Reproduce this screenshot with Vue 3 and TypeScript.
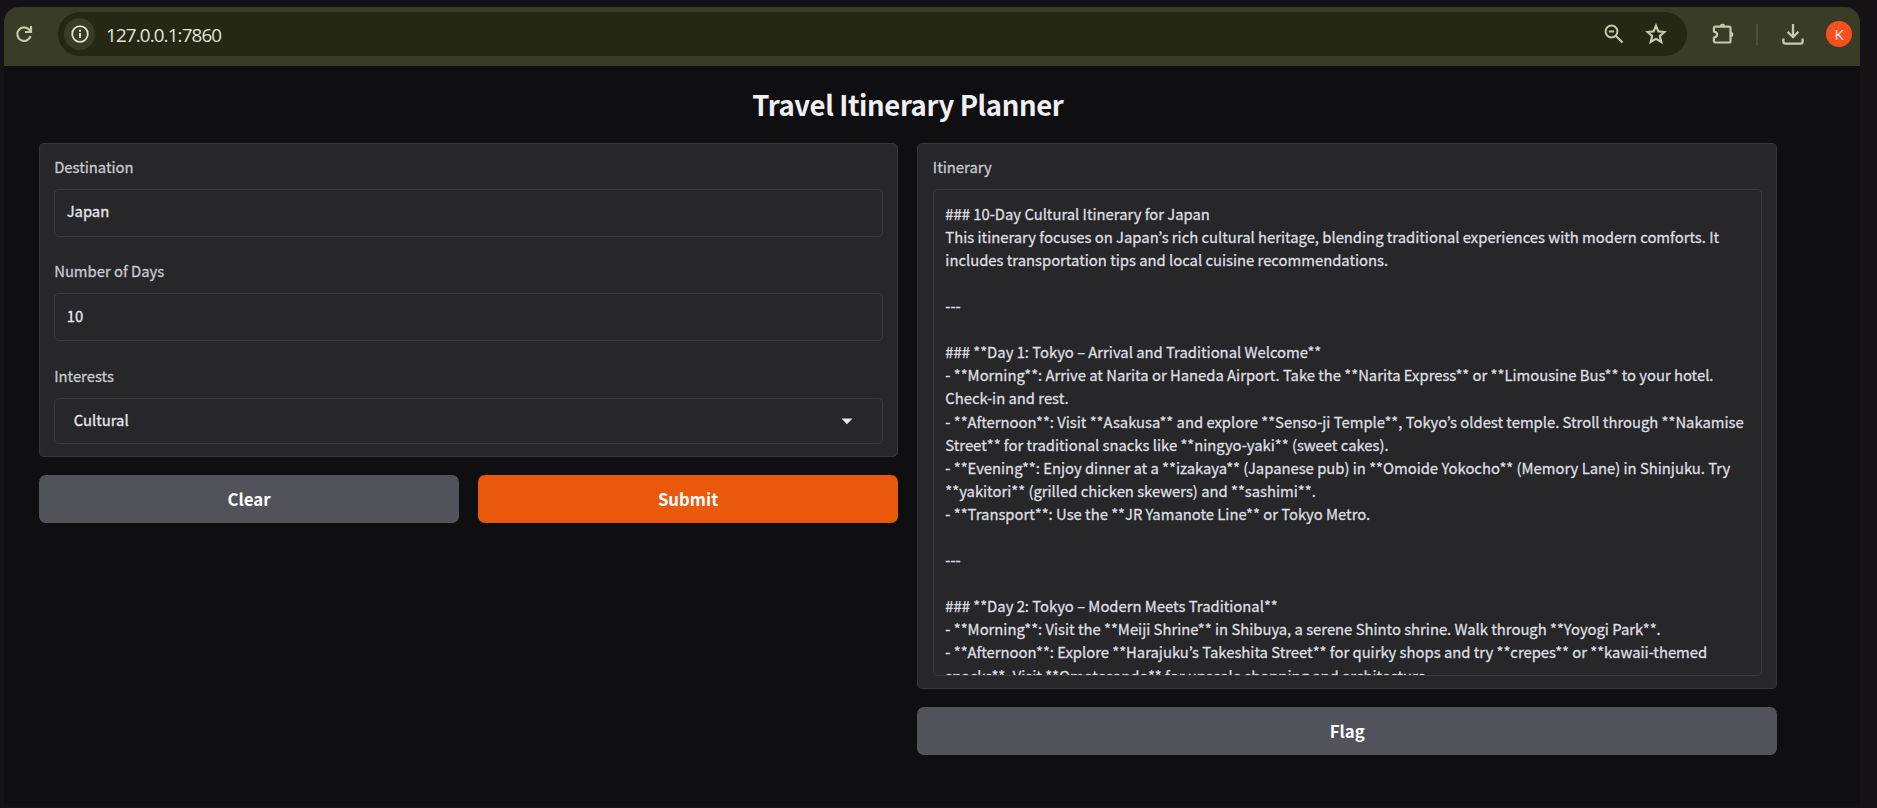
<script setup lang="ts">
import { ref } from 'vue'

const destination = ref('Japan')
const days = ref('10')
const interest = ref('Cultural')

const itinerary: string[] = [
  '### 10-Day Cultural Itinerary for Japan',
  'This itinerary focuses on Japan’s rich cultural heritage, blending traditional experiences with modern comforts. It',
  'includes transportation tips and local cuisine recommendations.',
  '',
  '---',
  '',
  '### **Day 1: Tokyo – Arrival and Traditional Welcome**',
  '- **Morning**: Arrive at Narita or Haneda Airport. Take the **Narita Express** or **Limousine Bus** to your hotel.',
  'Check-in and rest.',
  '- **Afternoon**: Visit **Asakusa** and explore **Senso-ji Temple**, Tokyo’s oldest temple. Stroll through **Nakamise',
  'Street** for traditional snacks like **ningyo-yaki** (sweet cakes).',
  '- **Evening**: Enjoy dinner at a **izakaya** (Japanese pub) in **Omoide Yokocho** (Memory Lane) in Shinjuku. Try',
  '**yakitori** (grilled chicken skewers) and **sashimi**.',
  '- **Transport**: Use the **JR Yamanote Line** or Tokyo Metro.',
  '',
  '---',
  '',
  '### **Day 2: Tokyo – Modern Meets Traditional**',
  '- **Morning**: Visit the **Meiji Shrine** in Shibuya, a serene Shinto shrine. Walk through **Yoyogi Park**.',
  '- **Afternoon**: Explore **Harajuku’s Takeshita Street** for quirky shops and try **crepes** or **kawaii-themed',
  'snacks**. Visit **Omotesando** for upscale shopping and architecture.',
]
</script>

<template>
  <div class="desktop">
    <div class="window">
      <header class="toolbar">
        <svg class="reload" viewBox="0 0 18 18" fill="none">
          <path d="M15.6 11.2A6.8 6.8 0 1 1 14.2 4.6L16 6.6" stroke="currentColor" stroke-width="2.2" />
          <path d="M16 1v6h-6" stroke="currentColor" stroke-width="2.2" />
        </svg>
        <div class="omnibox">
          <span class="site-info">
            <svg viewBox="0 0 18 18" fill="none">
              <circle cx="9" cy="9" r="7.8" stroke="currentColor" stroke-width="1.8" />
              <path d="M9 8v5" stroke="currentColor" stroke-width="1.9" />
              <path d="M9 4.8v1.9" stroke="currentColor" stroke-width="1.9" />
            </svg>
          </span>
          <span class="url">127.0.0.1:7860</span>
          <svg class="magnifier" viewBox="0 0 20 20" fill="none">
            <circle cx="7.5" cy="7.5" r="5.9" stroke="currentColor" stroke-width="2" />
            <path d="M11.7 11.7l6.8 6.8" stroke="currentColor" stroke-width="2.2" />
            <path d="M4.9 7.5h5.2" stroke="currentColor" stroke-width="1.8" />
          </svg>
          <svg class="star" viewBox="0 0 20 20" fill="none">
            <path d="M10 2.6l2.2 5.1 5.5.5-4.2 3.6 1.3 5.5-4.8-2.9-4.8 2.9 1.3-5.5-4.2-3.6 5.5-.5z" stroke="currentColor" stroke-width="2" />
          </svg>
        </div>
        <svg class="puzzle" viewBox="0 0 24 24">
          <path d="M4.4 4.6h13.7q1.4 0 1.4 1.4v13q0 1.5-1.5 1.5H4.3q-1.4 0-1.4-1.4v-3.5q3.2-.4 3.2-3t-3.2-3V6q0-1.4 1.5-1.4z" fill="none" stroke="currentColor" stroke-width="2.2" stroke-linejoin="round" />
          <path d="M8.8 4.4a2.7 2.7 0 0 1 5.4 0z" fill="currentColor" />
          <path d="M19.6 9.8a2.7 2.7 0 0 1 0 5.4z" fill="currentColor" />
        </svg>
        <span class="divider"></span>
        <svg class="download" viewBox="0 0 22 22" fill="none">
          <path d="M11 1v12.5M5.6 8.8l5.4 5.4 5.4-5.4" stroke="currentColor" stroke-width="2.3" />
          <path d="M1.4 15.6v3.1q0 1.9 1.9 1.9h15.4q1.9 0 1.9-1.9v-3.1" stroke="currentColor" stroke-width="2.3" />
        </svg>
        <span class="avatar">K</span>
      </header>

      <main class="page">
        <h1 class="title">Travel Itinerary Planner</h1>
        <div class="columns">
          <section class="column">
            <div class="panel form">
              <div class="field">
                <span class="label">Destination</span>
                <div class="box">{{ destination }}</div>
              </div>
              <div class="field roomy">
                <span class="label">Number of Days</span>
                <div class="box tall">{{ days }}</div>
              </div>
              <div class="field">
                <span class="label">Interests</span>
                <div class="box select">
                  <span>{{ interest }}</span>
                  <svg class="caret" viewBox="0 0 12 7"><path d="M.5.5h11L6 6.3z" fill="currentColor" /></svg>
                </div>
              </div>
            </div>
            <div class="actions">
              <button class="btn" type="button">Clear</button>
              <button class="btn primary" type="button">Submit</button>
            </div>
          </section>
          <section class="column">
            <div class="panel output">
              <span class="label">Itinerary</span>
              <div class="text">
                <div v-for="(line, i) in itinerary" :key="i" class="line">{{ line }}</div>
              </div>
            </div>
            <div class="actions">
              <button class="btn" type="button">Flag</button>
            </div>
          </section>
        </div>
      </main>
    </div>
  </div>
</template>

<style>
body {
  margin: 0;
  background: #151216;
}
</style>

<style scoped>
.desktop {
  box-sizing: border-box;
  width: 1877px;
  height: 808px;
  padding: 7px 17px 1px 4px;
  overflow: hidden;
  background: #151216;
  font-family: "Noto Sans CJK JP", "Open Sans", sans-serif;
}
.window {
  display: flex;
  flex-direction: column;
  height: 800px;
  border-radius: 15px 15px 0 0;
  overflow: hidden;
  background: #0f0f11;
}
.toolbar {
  box-sizing: border-box;
  display: flex;
  align-items: center;
  height: 59px;
  flex: none;
  padding: 0 8px 5px 10.5px;
  background: #393d27;
  color: #c5c9ae;
}
.toolbar svg {
  display: block;
  flex: none;
}
.reload {
  width: 18px;
  height: 18px;
}
.omnibox {
  box-sizing: border-box;
  display: flex;
  align-items: center;
  width: 1629px;
  height: 44px;
  margin-left: 25.5px;
  padding: 0 20px 0 6px;
  border-radius: 22px;
  background: #242815;
}
.site-info {
  display: flex;
  align-items: center;
  justify-content: center;
  width: 31px;
  height: 32px;
  border-radius: 50%;
  background: #393d27;
  color: #dfe3c8;
}
.site-info svg {
  width: 18px;
  height: 18px;
}
.url {
  flex: 1;
  margin-left: 11px;
  padding-top: 1.5px;
  font-family: "Open Sans", sans-serif;
  font-size: 18.8px;
  letter-spacing: -0.85px;
  color: #e2e5cf;
}
.magnifier {
  width: 20px;
  height: 20px;
  margin-right: 21px;
}
.star {
  width: 22px;
  height: 22px;
}
.puzzle {
  width: 24px;
  height: 24px;
  margin-left: 24px;
}
.divider {
  width: 2px;
  height: 21px;
  margin-left: 21px;
  background: #4d5138;
}
.download {
  width: 22px;
  height: 22px;
  margin-left: 24px;
}
.avatar {
  display: flex;
  align-items: center;
  justify-content: center;
  width: 26px;
  height: 26px;
  margin-left: auto;
  border-radius: 50%;
  background: #f7501e;
  color: #fbe9e0;
  font-family: "Open Sans", sans-serif;
  font-size: 15px;
}
.page {
  padding: 19px 83px 0 34.7px;
}
.title {
  margin: 0;
  height: 58px;
  line-height: 38px;
  text-align: center;
  font-size: 27.5px;
  letter-spacing: -0.4px;
  font-weight: 700;
  color: #f0f0f2;
}
.columns {
  display: grid;
  grid-template-columns: 1fr 1fr;
  gap: 19px;
}
.panel {
  box-sizing: border-box;
  border: 1px solid #38383b;
  border-radius: 5px;
  background: #27272a;
}
.form {
  height: 313.5px;
  padding: 11px 14px 0 14.5px;
}
.field {
  height: 104px;
}
.field.roomy {
  height: 105px;
}
.label {
  display: block;
  height: 34px;
  line-height: 23px;
  font-size: 14.8px;
  color: #c8c8cc;
  -webkit-text-stroke: 0.3px #c8c8cc;
}
.box {
  box-sizing: border-box;
  display: flex;
  align-items: center;
  height: 47.5px;
  padding: 0 12px 4px 11.5px;
  border: 1px solid #3a3a3d;
  border-radius: 5px;
  font-size: 14.8px;
  color: #e8e8ea;
  -webkit-text-stroke: 0.3px #e8e8ea;
}
.box.tall {
  height: 48px;
  padding-bottom: 3px;
}
.box.select {
  justify-content: space-between;
  height: 45.5px;
  padding: 0 29.5px 2px 18.5px;
}
.caret {
  width: 12px;
  height: 7px;
  margin-top: 3px;
}
.actions {
  display: flex;
  gap: 18.5px;
  margin-top: 18.5px;
}
.btn {
  flex: 1;
  height: 47.5px;
  padding: 0;
  border: 0;
  border-radius: 7px;
  background: #52525b;
  color: #fff;
  font-family: inherit;
  font-size: 16.8px;
  font-weight: 700;
}
.btn.primary {
  background: #ea580c;
}
.output {
  height: 545.5px;
  padding: 11px 14px 0 14.5px;
}
.text {
  box-sizing: border-box;
  height: 487px;
  padding: 11.7px 11.5px 0;
  border: 1px solid #3a3a3d;
  border-radius: 5px;
  overflow: hidden;
}
.line {
  height: 23.1px;
  line-height: 23.1px;
  white-space: pre;
  font-size: 14.8px;
  color: #dedee0;
  -webkit-text-stroke: 0.3px #dedee0;
}
</style>
